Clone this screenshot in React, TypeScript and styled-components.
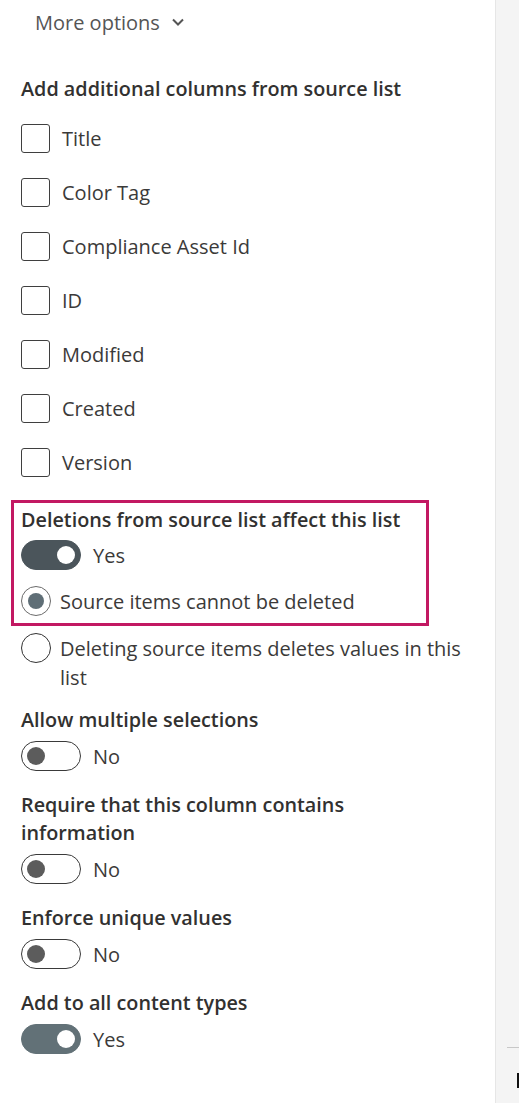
import React from "react";
import styled, { createGlobalStyle } from "styled-components";

const Global = createGlobalStyle`
  html, body { margin: 0; padding: 0; background: #ffffff; }
  body { font-family: "Open Sans", "Noto Sans", sans-serif; color: #323130; }
`;

const Page = styled.div`
  display: grid;
  grid-template-columns: 495px 24px;
  width: 519px;
  height: 1103px;
  overflow: hidden;
`;

const Main = styled.div`
  display: flex;
  flex-direction: column;
  padding-left: 21px;
  padding-right: 10px;
`;

const Side = styled.div`
  background: #f4f4f4;
  border-left: 1px solid #e6e6e6;
  display: flex;
  flex-direction: column;
  padding-top: 1047px;
  padding-left: 11px;
`;

const SideRule = styled.div`
  height: 1px;
  background: #c8c8c8;
`;

const SideMark = styled.div`
  margin-top: 25px;
  margin-left: 10px;
  width: 3px;
  height: 15px;
  background: #111;
`;

const MoreOptions = styled.div`
  display: flex;
  align-items: center;
  gap: 11px;
  height: 44px;
  padding-left: 14px;
  font-size: 20px;
  color: #555;
`;

const Heading = styled.div<{ $top?: number }>`
  font-size: 19.8px;
  font-weight: 600;
  line-height: 28px;
  max-width: 420px;
  margin-top: ${(p) => p.$top ?? 0}px;
  color: #323130;
`;

const CheckList = styled.div`
  display: flex;
  flex-direction: column;
  margin-top: 8px;
`;

const CheckRow = styled.label`
  display: flex;
  align-items: center;
  gap: 12px;
  height: 54px;
  font-size: 20px;
  color: #3b3a39;
`;

const Box = styled.span`
  width: 27px;
  height: 27px;
  border: 1.5px solid #3f3f3f;
  border-radius: 3px;
  flex: none;
`;

const Highlight = styled.div`
  margin-top: 11px;
  margin-left: -10px;
  width: 405px;
  border: 3px solid #c21862;
  padding: 3px 0 7px 7px;
  display: flex;
  flex-direction: column;
`;

const ToggleRow = styled.div<{ $top?: number }>`
  display: flex;
  align-items: center;
  gap: 12px;
  height: 36px;
  margin-top: ${(p) => p.$top ?? 4}px;
  font-size: 20px;
  color: #3b3a39;
`;

const Track = styled.span<{ $on: boolean; $shade?: string }>`
  position: relative;
  width: 60px;
  height: 30px;
  box-sizing: border-box;
  border-radius: 15px;
  flex: none;
  background: ${(p) => (p.$on ? p.$shade ?? "#4b555b" : "#fff")};
  border: 1px solid ${(p) => (p.$on ? p.$shade ?? "#4b555b" : "#3a3a3a")};
`;

const Thumb = styled.span<{ $on: boolean }>`
  position: absolute;
  top: 5px;
  left: ${(p) => (p.$on ? "35px" : "5px")};
  width: 18px;
  height: 18px;
  border-radius: 50%;
  background: ${(p) => (p.$on ? "#fff" : "#5c5c5c")};
`;

const RadioRow = styled.div<{ $top?: number }>`
  display: flex;
  align-items: flex-start;
  gap: 9px;
  margin-top: ${(p) => p.$top ?? 0}px;
  font-size: 20px;
  line-height: 29px;
  color: #3b3a39;
`;

const RadioText = styled.span`
  max-width: 404px;
`;

const Circle = styled.span<{ $checked: boolean }>`
  position: relative;
  flex: none;
  width: 30px;
  height: 30px;
  box-sizing: border-box;
  border-radius: 50%;
  border: 1px solid ${(p) => (p.$checked ? "#6b6b6b" : "#333")};
  margin-top: -1px;
  &::after {
    content: "";
    display: ${(p) => (p.$checked ? "block" : "none")};
    position: absolute;
    top: 6px;
    left: 6px;
    width: 16px;
    height: 16px;
    border-radius: 50%;
    background: #5f6e76;
  }
`;

const Toggle = ({ on, label, top, shade }: { on: boolean; label: string; top?: number; shade?: string }) => (
  <ToggleRow $top={top}>
    <Track $on={on} $shade={shade}>
      <Thumb $on={on} />
    </Track>
    <span>{label}</span>
  </ToggleRow>
);

const columns = ["Title", "Color Tag", "Compliance Asset Id", "ID", "Modified", "Created", "Version"];

export default function App() {
  return (
    <>
      <Global />
      <Page>
        <Main>
          <MoreOptions>
            <span>More options</span>
            <svg width="14" height="10" viewBox="0 0 14 10">
              <path d="M2 2.5 L7 7.5 L12 2.5" fill="none" stroke="#555" strokeWidth="2" />
            </svg>
          </MoreOptions>
          <Heading $top={31}>Add additional columns from source list</Heading>
          <CheckList>
            {columns.map((c) => (
              <CheckRow key={c}>
                <Box />
                <span>{c}</span>
              </CheckRow>
            ))}
          </CheckList>
          <Highlight>
            <Heading>Deletions from source list affect this list</Heading>
            <Toggle on label="Yes" top={3} />
            <RadioRow $top={14}>
              <Circle $checked />
              <RadioText>Source items cannot be deleted</RadioText>
            </RadioRow>
          </Highlight>
          <RadioRow $top={8}>
            <Circle $checked={false} />
            <RadioText>Deleting source items deletes values in this list</RadioText>
          </RadioRow>
          <Heading $top={14}>Allow multiple selections</Heading>
          <Toggle on={false} label="No" />
          <Heading $top={17}>Require that this column contains information</Heading>
          <Toggle on={false} label="No" />
          <Heading $top={17}>Enforce unique values</Heading>
          <Toggle on={false} label="No" />
          <Heading $top={17}>Add to all content types</Heading>
          <Toggle on label="Yes" shade="#627177" />
        </Main>
        <Side>
          <SideRule />
          <SideMark />
        </Side>
      </Page>
    </>
  );
}
